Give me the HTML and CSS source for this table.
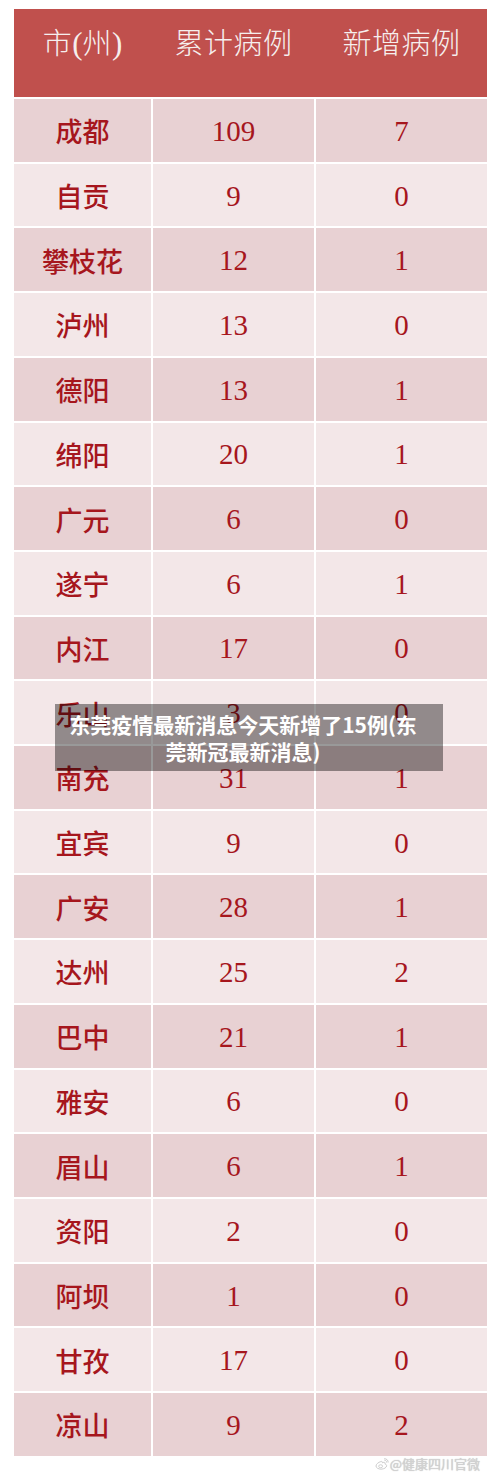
FILE: index.html
```html
<!DOCTYPE html>
<html lang="zh-CN">
<head>
<meta charset="utf-8">
<title>四川各市(州)病例</title>
<link rel="stylesheet" href="styles.css">
</head>
<body>
<div class="page">
  <div class="table">
    <div class="head">
      <div class="hcell">市<span class="paren">(</span>州<span class="paren">)</span></div>
      <div class="hcell">累计病例</div>
      <div class="hcell">新增病例</div>
    </div>
    <div class="body">
      <div class="row"><div class="city">成都</div><div class="num">109</div><div class="num">7</div></div>
      <div class="row"><div class="city">自贡</div><div class="num">9</div><div class="num">0</div></div>
      <div class="row"><div class="city">攀枝花</div><div class="num">12</div><div class="num">1</div></div>
      <div class="row"><div class="city">泸州</div><div class="num">13</div><div class="num">0</div></div>
      <div class="row"><div class="city">德阳</div><div class="num">13</div><div class="num">1</div></div>
      <div class="row"><div class="city">绵阳</div><div class="num">20</div><div class="num">1</div></div>
      <div class="row"><div class="city">广元</div><div class="num">6</div><div class="num">0</div></div>
      <div class="row"><div class="city">遂宁</div><div class="num">6</div><div class="num">1</div></div>
      <div class="row"><div class="city">内江</div><div class="num">17</div><div class="num">0</div></div>
      <div class="row"><div class="city">乐山</div><div class="num">3</div><div class="num">0</div></div>
      <div class="row"><div class="city">南充</div><div class="num">31</div><div class="num">1</div></div>
      <div class="row"><div class="city">宜宾</div><div class="num">9</div><div class="num">0</div></div>
      <div class="row"><div class="city">广安</div><div class="num">28</div><div class="num">1</div></div>
      <div class="row"><div class="city">达州</div><div class="num">25</div><div class="num">2</div></div>
      <div class="row"><div class="city">巴中</div><div class="num">21</div><div class="num">1</div></div>
      <div class="row"><div class="city">雅安</div><div class="num">6</div><div class="num">0</div></div>
      <div class="row"><div class="city">眉山</div><div class="num">6</div><div class="num">1</div></div>
      <div class="row"><div class="city">资阳</div><div class="num">2</div><div class="num">0</div></div>
      <div class="row"><div class="city">阿坝</div><div class="num">1</div><div class="num">0</div></div>
      <div class="row"><div class="city">甘孜</div><div class="num">17</div><div class="num">0</div></div>
      <div class="row"><div class="city">凉山</div><div class="num">9</div><div class="num">2</div></div>
    </div>
  </div>
  <div class="watermark">
    <svg class="weibo" viewBox="0 0 16 14" width="14" height="12" aria-hidden="true">
      <path d="M6.6 4.2c-2.6 0.6-5.6 3-5.6 5.2 0 2 2.6 3.6 5.9 3.6 3.6 0 6.5-1.9 6.5-4 0-1.4-1.4-1.9-2-2 0.4-1 0.3-2.2-1.2-2-1 0.1-1.6 0.6-1.9 0.6 0.3-1-0.1-2.1-1.7-1.4z" fill="none" stroke="#c9c9c9" stroke-width="1.1"/>
      <ellipse cx="6.4" cy="9.6" rx="2.3" ry="1.7" fill="none" stroke="#c9c9c9" stroke-width="1"/>
      <path d="M11.2 2.6c1.3 0.1 2.2 1 2.2 2.3M11 0.8c2.4 0 4.2 1.7 4.2 4" fill="none" stroke="#c9c9c9" stroke-width="1.1" stroke-linecap="round"/>
    </svg>
    <span class="wm-text">@健康四川官微</span>
  </div>
  <div class="caption">东莞疫情最新消息今天新增了15例(东莞新冠最新消息)</div>
</div>
</body>
</html>
```
FILE: styles.css
```css
html, body {
  margin: 0;
  padding: 0;
  background: #ffffff;
}

.page {
  position: relative;
  width: 500px;
  height: 1475px;
  padding: 9px 13px 0 14px;
  box-sizing: border-box;
}

.table {
  width: 473px;
  display: flex;
  flex-direction: column;
}

.head {
  display: grid;
  grid-template-columns: 137px 161px 171px;
  column-gap: 2px;
  height: 88px;
  background: #c0504d;
}

.hcell {
  color: #f6efee;
  font-family: "Noto Sans CJK SC", "Noto Sans", sans-serif;
  font-weight: 300;
  font-size: 29px;
  line-height: 34px;
  text-align: center;
  padding-top: 15px;
  letter-spacing: 0.5px;
}

.paren {
  font-family: "Liberation Serif", serif;
  font-size: 31px;
  letter-spacing: 0;
}

.body {
  display: flex;
  flex-direction: column;
  gap: 2px;
  padding-top: 2px;
  background: #ffffff;
}

.row {
  display: grid;
  grid-template-columns: 137px 161px 171px;
  column-gap: 2px;
  height: 62.71px;
}

.row > div {
  display: flex;
  align-items: center;
  justify-content: center;
  color: #a6161d;
}

.row:nth-child(odd) > div {
  background: #e8d1d3;
}

.row:nth-child(even) > div {
  background: #f3e7e8;
}

.city {
  font-family: "Noto Sans CJK SC", "Noto Sans", sans-serif;
  font-weight: 500;
  font-size: 27px;
  padding-top: 1px;
}

.num {
  font-family: "Liberation Serif", serif;
  font-size: 29px;
  padding-top: 2px;
}

.watermark {
  display: flex;
  align-items: center;
  justify-content: flex-end;
  gap: 1px;
  padding-right: 7px;
  height: 16px;
}

.weibo {
  display: block;
}

.wm-text {
  font-family: "Noto Sans CJK SC", "Noto Sans", sans-serif;
  font-size: 13px;
  line-height: 16px;
  color: #d2d2d2;
  text-shadow: 0 0 1px #b8b8b8;
}

.caption {
  position: absolute;
  left: 55px;
  top: 704px;
  width: 388px;
  height: 67px;
  box-sizing: border-box;
  padding: 7px 18px 0 6px;
  background: rgba(0, 0, 0, 0.4);
  color: #ffffff;
  font-family: "Noto Sans CJK SC", "Noto Sans", sans-serif;
  font-weight: 700;
  font-size: 21px;
  line-height: 27px;
  text-align: center;
}
```
